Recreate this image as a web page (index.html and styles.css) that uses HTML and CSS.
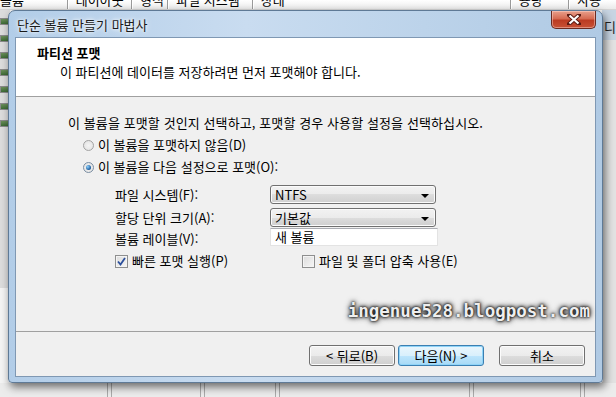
FILE: index.html
```html
<!DOCTYPE html>
<html lang="ko">
<head>
  <meta charset="UTF-8">
  <title>단순 볼륨 만들기 마법사</title>
  <link rel="stylesheet" href="styles.css">
</head>
<body>
  <div class="desk">
    <!-- 뒤쪽 디스크 관리 목록 -->
    <div class="list-head">
      <span class="col c1">볼륨</span>
      <span class="col c2">레이아웃</span>
      <span class="col c3">형식</span>
      <span class="col c4">파일 시스템</span>
      <span class="col c5">상태</span>
      <span class="col c6">용량</span>
      <span class="col c7">사용</span>
    </div>
    <div class="side-left">
      <i></i><i></i><i></i><i></i><i></i><i></i><i></i>
    </div>
    <div class="side-right"><span>디스</span></div>
    <div class="list-foot">
      <b class="l1"></b><b class="l2"></b><b class="l3"></b><b class="l4"></b><b class="l5"></b>
    </div>

    <div class="window">
      <div class="titlebar">
        <span class="title">단순 볼륨 만들기 마법사</span>
        <div class="close" aria-label="닫기">
          <svg width="14" height="11" viewBox="0 0 14 11">
            <path d="M2 1 L12 10 M12 1 L2 10" stroke="#5a1a12" stroke-width="4" stroke-linecap="square"/>
            <path d="M2.5 1.5 L11.5 9.5 M11.5 1.5 L2.5 9.5" stroke="#fff" stroke-width="2.2"/>
          </svg>
        </div>
      </div>

      <div class="client">
        <div class="wiz-head">
          <h1>파티션 포맷</h1>
          <p>이 파티션에 데이터를 저장하려면 먼저 포맷해야 합니다.</p>
        </div>

        <div class="wiz-body">
          <p class="intro">이 볼륨을 포맷할 것인지 선택하고, 포맷할 경우 사용할 설정을 선택하십시오.</p>

          <label class="radio"><span class="dot"></span>이 볼륨을 포맷하지 않음(D)</label>
          <label class="radio"><span class="dot on"></span>이 볼륨을 다음 설정으로 포맷(O):</label>

          <div class="settings">
            <span class="lbl">파일 시스템(F):</span>
            <div class="select">NTFS<span class="arrow"></span></div>
            <span class="lbl">할당 단위 크기(A):</span>
            <div class="select">기본값<span class="arrow"></span></div>
            <span class="lbl">볼륨 레이블(V):</span>
            <div class="field">새 볼륨</div>
          </div>

          <div class="checks">
            <label class="check"><span class="box on">
              <svg width="9" height="9" viewBox="0 0 9 9"><path d="M1 4.5 L3.5 7.5 L8 1" fill="none" stroke="#2b4f9c" stroke-width="1.8"/></svg>
            </span>빠른 포맷 실행(P)</label>
            <label class="check second"><span class="box"></span>파일 및 폴더 압축 사용(E)</label>
          </div>

          <div class="mark">ingenue528.blogpost.com</div>
        </div>

        <div class="wiz-foot">
          <button class="btn">&lt; 뒤로(B)</button>
          <button class="btn default">다음(N) &gt;</button>
          <button class="btn cancel">취소</button>
        </div>
      </div>
    </div>
  </div>
</body>
</html>
```

FILE: styles.css
```css
body {
  margin: 0;
  padding: 0;
  font-family: "Noto Sans CJK KR", "Noto Sans", sans-serif;
  font-size: 13px;
  color: #000;
}

.desk {
  position: relative;
  width: 616px;
  height: 397px;
  overflow: hidden;
  background: #f4f4f4;
}

/* 뒤쪽 목록 */
.list-head {
  height: 9px;
  display: flex;
  background: linear-gradient(#ffffff, #eaeaea);
  border-bottom: 1px solid #d5d5d5;
  overflow: hidden;
}

.col {
  display: block;
  line-height: 12px;
  margin-top: -6px;
  padding-left: 8px;
  border-right: 1px solid #9a9a9a;
  box-shadow: 1px 0 0 #fff;
  white-space: nowrap;
  overflow: hidden;
}

.c1 { width: 69px; padding-left: 0; }
.c2 { width: 57px; }
.c3 { width: 28px; }
.c4 { width: 78px; }
.c5 { width: 257px; }
.c6 { width: 51px; }
.c7 { width: 40px; border-right: none; }

.side-left {
  position: absolute;
  left: 0;
  top: 10px;
  width: 10px;
  height: 270px;
  background: #dcdcdc;
  display: flex;
  flex-direction: column;
  gap: 10px;
  padding-top: 8px;
}

.side-left i {
  display: block;
  width: 7px;
  height: 5px;
  background: linear-gradient(#6b8f5a, #3d6b35);
  border: 1px solid #8a8a8a;
}

.side-right {
  position: absolute;
  right: 0;
  top: 10px;
  width: 14px;
  height: 380px;
  background: linear-gradient(#c8d5e3 0, #c8d5e3 30px, #e2e2e2 30px);
  overflow: hidden;
}

.side-right span {
  display: block;
  margin: 7px 0 0 2px;
  white-space: nowrap;
  color: #222;
}

.list-foot {
  position: absolute;
  left: 0;
  top: 383px;
  width: 616px;
  height: 14px;
  background: #ececec;
}

.list-foot b {
  position: absolute;
  top: 0;
  width: 3px;
  height: 14px;
  border-left: 1px solid #aaa;
  border-right: 1px solid #aaa;
}

.l1 { left: 107px; }
.l2 { left: 200px; }
.l3 { left: 275px; }
.l4 { left: 469px; }
.l5 { left: 580px; }

/* 대화 상자 */
.window {
  position: absolute;
  left: 8px;
  top: 10px;
  width: 595px;
  height: 373px;
  box-sizing: border-box;
  border: 1px solid #5f7a96;
  border-radius: 7px 7px 4px 4px;
  background: linear-gradient(90deg, #b2cde8, #c9dcf0 40%, #bcd3ea 70%, #b0cae4);
  box-shadow: 2px 4px 8px rgba(0, 0, 0, 0.55);
  display: flex;
  flex-direction: column;
  padding: 0 6px 5px 6px;
}

.titlebar {
  height: 26px;
  display: flex;
  align-items: center;
  position: relative;
}

.title {
  margin-left: 2px;
  margin-top: 1px;
  color: #1a1a1a;
  text-shadow: 0 0 6px #fff, 0 0 3px #fff;
}

.close {
  position: absolute;
  right: 0;
  top: 0;
  width: 45px;
  height: 18px;
  box-sizing: border-box;
  border: 1px solid #6b2a20;
  border-top: none;
  border-radius: 0 0 5px 5px;
  background: linear-gradient(#e8a08c 0, #d56b52 45%, #bb3b22 55%, #c85236 100%);
  box-shadow: inset 0 0 0 1px rgba(255, 220, 210, 0.45);
  display: flex;
  align-items: center;
  justify-content: center;
}

.client {
  flex: 1;
  display: flex;
  flex-direction: column;
  border: 1px solid #7f98b3;
  background: #f0f0f0;
}

.wiz-head {
  height: 59px;
  background: #fff;
  border-bottom: 1px solid #a0a0a0;
  padding: 7px 0 0 21px;
  box-sizing: border-box;
}

.wiz-head h1 {
  margin: 0;
  font-size: 13px;
  font-weight: bold;
  line-height: 15px;
}

.wiz-head p {
  margin: 4px 0 0 23px;
  line-height: 15px;
}

.wiz-body {
  height: 235px;
  border-bottom: 1px solid #a0a0a0;
  position: relative;
  padding: 18px 0 0 52px;
  box-sizing: border-box;
}

.intro {
  margin: 0;
  line-height: 15px;
  letter-spacing: 0.1px;
}

.radio {
  display: flex;
  align-items: center;
  margin: 7px 0 0 15px;
  height: 16px;
  gap: 4px;
  line-height: 16px;
}

.radio + .radio {
  margin-top: 6px;
}

.dot {
  width: 11px;
  height: 11px;
  border-radius: 50%;
  border: 1px solid #a3a3a3;
  background: radial-gradient(circle, #f4f4f4 0, #e0e0e0 100%);
  box-sizing: border-box;
  position: relative;
}

.dot.on {
  border-color: #7a8ea3;
}

.dot.on::after {
  content: "";
  position: absolute;
  left: 2px;
  top: 2px;
  width: 5px;
  height: 5px;
  border-radius: 50%;
  background: radial-gradient(circle at 35% 35%, #8fd3ff, #1a5a9c 70%, #0c3a6e);
}

.settings {
  display: grid;
  grid-template-columns: 155px 166px;
  row-gap: 4px;
  align-items: center;
  margin: 10px 0 0 47px;
}

.lbl {
  line-height: 15px;
}

.select {
  height: 19px;
  border: 1px solid #707070;
  border-radius: 3px;
  background: linear-gradient(#f2f2f2 0, #ebebeb 50%, #dddddd 50%, #cfcfcf 100%);
  box-shadow: inset 0 0 0 1px #fbfbfb;
  padding-left: 4px;
  line-height: 18px;
  box-sizing: border-box;
  position: relative;
}

.arrow {
  position: absolute;
  right: 6px;
  top: 8px;
  border-left: 4px solid transparent;
  border-right: 4px solid transparent;
  border-top: 4px solid #000;
}

.field {
  width: 168px;
  height: 18px;
  margin-top: -3px;
  border: 1px solid #e3e3e3;
  border-top-color: #abadb3;
  background: #fff;
  padding-left: 4px;
  line-height: 16px;
  box-sizing: border-box;
}

.checks {
  display: flex;
  margin: 7px 0 0 47px;
}

.check {
  display: flex;
  align-items: center;
  gap: 4px;
  height: 16px;
  line-height: 16px;
}

.check.second {
  margin-left: 74px;
}

.box {
  width: 13px;
  height: 13px;
  border: 1px solid #8e8f8f;
  background: linear-gradient(135deg, #dcdcdc, #f6f6f6);
  box-shadow: inset 0 0 0 1px #f4f4f4;
  box-sizing: border-box;
  display: flex;
  align-items: center;
  justify-content: center;
}

.mark {
  position: absolute;
  right: 5px;
  bottom: 10px;
  font-family: "DejaVu Sans Mono", "Liberation Mono", monospace;
  font-size: 17.5px;
  font-weight: bold;
  color: #eeeeee;
  text-shadow: 0 0 2px #000, 0 0 4px #000, 0 0 6px #333;
}

.wiz-foot {
  flex: 1;
  display: flex;
  align-items: flex-start;
  padding: 13px 0 0 293px;
}

.btn {
  width: 86px;
  height: 21px;
  padding: 0;
  border: 1px solid #707070;
  border-radius: 3px;
  background: linear-gradient(#f2f2f2 0, #ebebeb 50%, #dddddd 50%, #cfcfcf 100%);
  box-shadow: inset 0 0 0 1px #fcfcfc;
  font-family: "Noto Sans CJK KR", "Noto Sans", sans-serif;
  font-size: 13px;
  color: #000;
  line-height: 19px;
}

.btn.default {
  margin-left: 3px;
  border-color: #3c7fb1;
  background: linear-gradient(#eaf6fd 0, #d9f0fc 50%, #bee6fd 50%, #a7d9f5 100%);
  box-shadow: inset 0 0 0 1px #8fd4f8;
}

.btn.cancel {
  margin-left: 15px;
}
```
